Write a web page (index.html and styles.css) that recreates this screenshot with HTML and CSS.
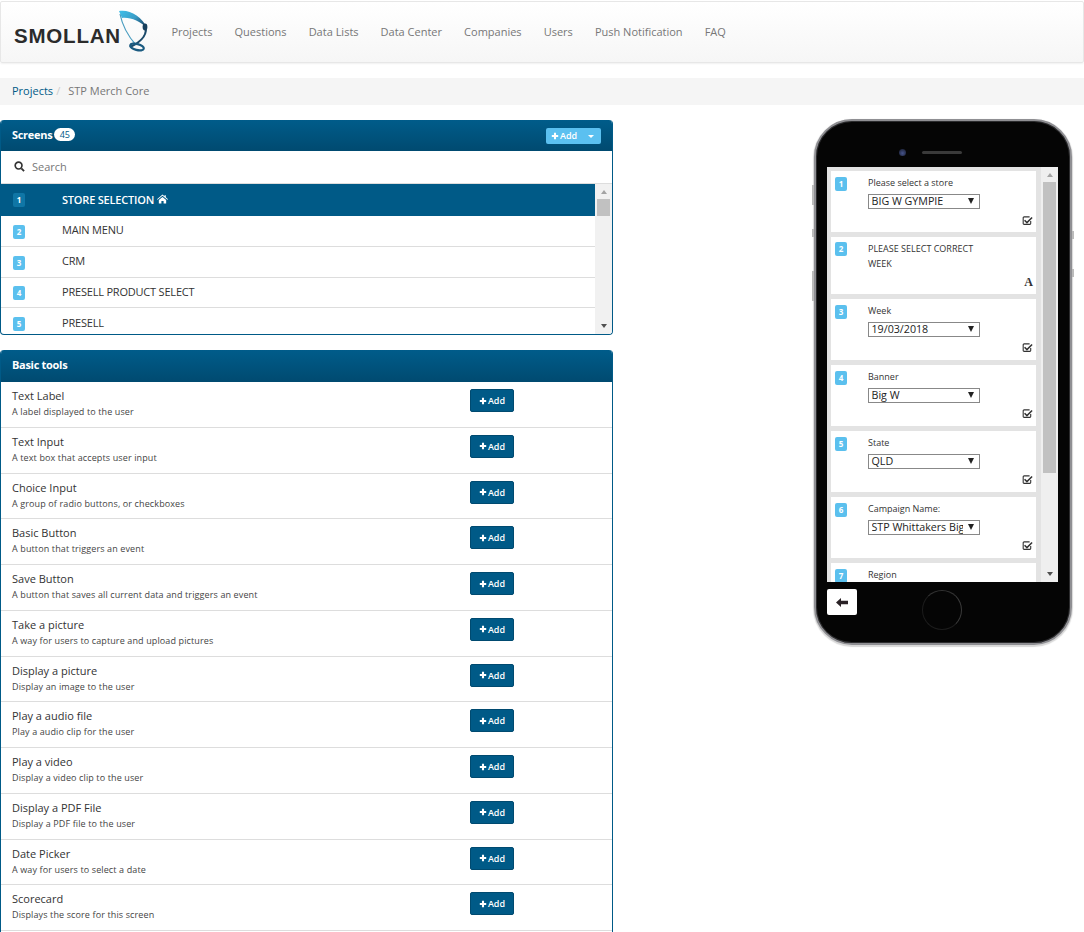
FILE: index.html
```html
<!DOCTYPE html>
<html lang="en">
<head>
<meta charset="utf-8">
<title>STP Merch Core</title>
<link rel="stylesheet" href="styles.css">
</head>
<body>
<svg class="defs" width="0" height="0" aria-hidden="true">
  <symbol id="plus" viewBox="0 0 10 10"><path d="M3.7 1h2.6v2.7H9v2.6H6.3V9H3.7V6.3H1V3.7h2.7z" fill="currentColor"/></symbol>
  <symbol id="check" viewBox="0 0 12 12"><path d="M9.5 6.500v2.700a1 1 0 0 1-1 1H2.300a1 1 0 0 1-1-1V3a1 1 0 0 1 1-1h6" fill="none" stroke="currentColor" stroke-width="1.200"/><path d="M3.400 5.200l2 2 5-5 1.200 1.200-6.200 6.200-3.200-3.200z" fill="currentColor"/></symbol>
</svg>
<header class="navbar">
  <a class="brand">
    <span class="brand-text">SMOLLAN</span>
    <svg class="brand-mark" width="34" height="44" viewBox="0 0 34 44">
      <defs><linearGradient id="lg" x1="0" y1="0" x2="1" y2=".6"><stop offset="0" stop-color="#3fc0ea"/><stop offset=".6" stop-color="#3a9cc6"/><stop offset="1" stop-color="#1c4f72"/></linearGradient></defs>
      <path d="M1 1C11-1 24 6 29 18 22 11 12 7 4 8z" fill="url(#lg)"/>
      <path d="M2 4C4 14 10 26 18 35" fill="none" stroke="#4a9dc0" stroke-width="1.200"/>
      <path d="M27 15C30 23 25 31 12 37" fill="none" stroke="#1c4a6a" stroke-width="2.200"/>
      <ellipse cx="27" cy="17" rx="2.400" ry="3.400" fill="#173f5c"/>
      <ellipse cx="19" cy="37" rx="7" ry="3" fill="none" stroke="#1a5a80" stroke-width="2.200" transform="rotate(15 19 37)"/>
    </svg>
  </a>
  <nav class="nav">
    <a>Projects</a><a>Questions</a><a>Data Lists</a><a>Data Center</a><a>Companies</a><a>Users</a><a>Push Notification</a><a>FAQ</a>
  </nav>
</header>

<div class="breadcrumb"><a>Projects</a><span class="sep">/</span><span class="current">STP Merch Core</span></div>

<main class="content">
  <div class="left">
    <section class="panel screens">
      <div class="panel-head">
        <span class="panel-title">Screens</span><span class="badge">45</span>
        <span class="split-add"><span class="split-main"><svg class="ico"><use href="#plus"/></svg>Add</span><span class="split-caret"></span></span>
      </div>
      <div class="search">
        <svg width="11" height="11" viewBox="0 0 12 12"><circle cx="5" cy="5" r="3.700" fill="none" stroke="#333" stroke-width="1.800"/><path d="M8 8l3 3" stroke="#333" stroke-width="2"/></svg>
        <span>Search</span>
      </div>
      <div class="list-wrap">
        <ul class="screen-list">
          <li class="active"><span class="num">1</span><span class="name">STORE SELECTION</span><svg class="home" width="11" height="10" viewBox="0 0 12 10"><path d="M6 0l2.200 1.900V.8h1.400v2.300L12 5.200l-.7.7L6 1.500.7 5.900 0 5.200zM2 6l4-3.300 4 3.300v4H7.200V7.200H4.800V10H2z" fill="#fff"/></svg></li>
          <li><span class="num">2</span><span class="name">MAIN MENU</span></li>
          <li><span class="num">3</span><span class="name">CRM</span></li>
          <li><span class="num">4</span><span class="name">PRESELL PRODUCT SELECT</span></li>
          <li><span class="num">5</span><span class="name">PRESELL</span></li>
        </ul>
        <div class="scrollbar">
          <span class="arrow up"></span><span class="thumb"></span><span class="arrow down"></span>
        </div>
      </div>
    </section>

    <section class="panel tools">
      <div class="panel-head tall"><span class="panel-title">Basic tools</span></div>
      <ul class="tool-list">
        <li><div class="tool-text"><b>Text Label</b><small>A label displayed to the user</small></div><button class="add"><svg class="ico"><use href="#plus"/></svg>Add</button></li>
        <li><div class="tool-text"><b>Text Input</b><small>A text box that accepts user input</small></div><button class="add"><svg class="ico"><use href="#plus"/></svg>Add</button></li>
        <li><div class="tool-text"><b>Choice Input</b><small>A group of radio buttons, or checkboxes</small></div><button class="add"><svg class="ico"><use href="#plus"/></svg>Add</button></li>
        <li><div class="tool-text"><b>Basic Button</b><small>A button that triggers an event</small></div><button class="add"><svg class="ico"><use href="#plus"/></svg>Add</button></li>
        <li><div class="tool-text"><b>Save Button</b><small>A button that saves all current data and triggers an event</small></div><button class="add"><svg class="ico"><use href="#plus"/></svg>Add</button></li>
        <li><div class="tool-text"><b>Take a picture</b><small>A way for users to capture and upload pictures</small></div><button class="add"><svg class="ico"><use href="#plus"/></svg>Add</button></li>
        <li><div class="tool-text"><b>Display a picture</b><small>Display an image to the user</small></div><button class="add"><svg class="ico"><use href="#plus"/></svg>Add</button></li>
        <li><div class="tool-text"><b>Play a audio file</b><small>Play a audio clip for the user</small></div><button class="add"><svg class="ico"><use href="#plus"/></svg>Add</button></li>
        <li><div class="tool-text"><b>Play a video</b><small>Display a video clip to the user</small></div><button class="add"><svg class="ico"><use href="#plus"/></svg>Add</button></li>
        <li><div class="tool-text"><b>Display a PDF File</b><small>Display a PDF file to the user</small></div><button class="add"><svg class="ico"><use href="#plus"/></svg>Add</button></li>
        <li><div class="tool-text"><b>Date Picker</b><small>A way for users to select a date</small></div><button class="add"><svg class="ico"><use href="#plus"/></svg>Add</button></li>
        <li><div class="tool-text"><b>Scorecard</b><small>Displays the score for this screen</small></div><button class="add"><svg class="ico"><use href="#plus"/></svg>Add</button></li>
      </ul>
    </section>
  </div>

  <aside class="phone">
    <span class="side-btn b1"></span><span class="side-btn b2"></span><span class="side-btn b3"></span><span class="side-btn b4"></span><span class="side-btn b5"></span>
    <div class="earpiece"><span class="camera"></span><span class="speaker"></span></div>
    <div class="phone-screen">
      <div class="cards">
        <div class="card h61 first"><span class="num">1</span><div class="card-body"><label>Please select a store</label><div class="fake-select">BIG W GYMPIE</div></div><svg class="card-ico"><use href="#check"/></svg></div>
        <div class="card h57"><span class="num up1">2</span><div class="card-body"><p class="card-label">PLEASE SELECT CORRECT WEEK</p></div><span class="card-a">A</span></div>
        <div class="card h61"><span class="num">3</span><div class="card-body"><label>Week</label><div class="fake-select">19/03/2018</div></div><svg class="card-ico"><use href="#check"/></svg></div>
        <div class="card h61"><span class="num">4</span><div class="card-body"><label>Banner</label><div class="fake-select">Big W</div></div><svg class="card-ico"><use href="#check"/></svg></div>
        <div class="card h61"><span class="num">5</span><div class="card-body"><label>State</label><div class="fake-select">QLD</div></div><svg class="card-ico"><use href="#check"/></svg></div>
        <div class="card h61"><span class="num">6</span><div class="card-body"><label>Campaign Name:</label><div class="fake-select"><span class="clip">STP Whittakers Big</span></div></div><svg class="card-ico"><use href="#check"/></svg></div>
        <div class="card h61"><span class="num">7</span><div class="card-body"><label>Region</label></div></div>
      </div>
      <div class="phone-scroll"><span class="arrow up"></span><span class="thumb"></span><span class="arrow down"></span></div>
    </div>
    <div class="phone-bottom">
      <button class="back"><svg width="12" height="9" viewBox="0 0 12 9"><path d="M0 4.500L5 0v2.800h7v3.400H5V9z" fill="#2a2226"/></svg></button>
      <span class="home-btn"></span>
    </div>
  </aside>
</main>
</body>
</html>
```
FILE: styles.css
```css
* { box-sizing: border-box; }
html, body { margin: 0; height: 932px; overflow: hidden; background: #fff; }
body { font-family: "Open Sans", "Liberation Sans", sans-serif; font-size: 11px; color: #333; padding-top: 1px; }
.defs { position: absolute; }
ul { list-style: none; margin: 0; padding: 0; }

.navbar { height: 62px; display: flex; align-items: center; border: 1px solid #e7e7e7; border-radius: 2px; background: linear-gradient(#fff, #f6f6f6); box-shadow: 0 1px 2px rgba(0,0,0,.06); }
.brand { position: relative; width: 159px; height: 60px; flex: none; display: block; }
.brand-text { position: absolute; left: 13px; top: 21px; font-family: "Liberation Sans", sans-serif; font-weight: 700; font-size: 20.500px; letter-spacing: .8px; line-height: 26px; color: #2b2b2b; }
.brand-mark { position: absolute; left: 117px; top: 8px; }
.nav { display: flex; gap: 22.050px; margin-left: 11.400px; }
.nav a { color: #777; font-size: 11px; line-height: 16px; }

.breadcrumb { margin-top: 15px; height: 27px; background: #f5f5f5; padding: 0 0 2px 12px; display: flex; align-items: center; font-size: 11px; }
.breadcrumb a { color: #005a87; }
.sep { color: #ccc; margin: 0 8px 0 3px; }
.current { color: #777; }

.content { display: flex; align-items: flex-start; margin-top: 15px; }
.left { width: 613px; flex: none; display: flex; flex-direction: column; gap: 15px; }

.panel { border: 1px solid #005a87; border-top: 0; border-radius: 4px; overflow: hidden; background: #fff; }
.panel-head { height: 31px; padding: 0 0 2px 11px; display: flex; align-items: center; color: #fff; background: linear-gradient(#005c8a, #004a70); position: relative; }
.panel-head.tall { height: 32px; padding-bottom: 3px; }
.panel-title { font-weight: 700; font-size: 11px; letter-spacing: -.3px; }
.badge { margin-left: 2px; height: 13px; min-width: 21px; padding: 0 5px; border-radius: 7px; background: #fff; color: #005a87; font-size: 9px; line-height: 13px; text-align: center; }
.split-add { margin: 2px 11px 0 auto; height: 16px; display: flex; background: #5bc0f0; border-radius: 2px; color: #fff; font-size: 9px; font-weight: 600; line-height: 16px; }
.split-main { width: 34px; padding-left: 5px; display: flex; align-items: center; gap: 1px; }
.split-caret { width: 21px; position: relative; }
.split-caret::after { content: ""; position: absolute; left: 8px; top: 7px; border: 3px solid transparent; border-top-color: #fff; border-bottom: 0; }
.ico { width: 8px; height: 8px; }

.search { height: 33px; display: flex; align-items: center; gap: 7px; padding: 0 0 2px 13px; color: #777; font-size: 11px; border-bottom: 1px solid #ddd; }

.list-wrap { height: 150px; display: flex; overflow: hidden; }
.screen-list { flex: 1; min-width: 0; }
.screen-list li { height: 30.750px; display: flex; align-items: center; padding-left: 12px; border-bottom: 1px solid #ddd; font-size: 11px; color: #333; }
.screen-list li.active { height: 32px; background: #005a87; color: #fff; font-weight: 600; border-bottom: 0; }
.screen-list li .num { margin-top: 2px; }
.screen-list li.active .num { margin-top: 0; }
.num { width: 12px; height: 14px; flex: none; border-radius: 2px; background: #5bc0ee; color: #fff; font-size: 8px; font-weight: 700; line-height: 14px; text-align: center; }
.active .num { background: #0f76a6; }
.name { margin: 0 0 2px 37px; letter-spacing: -.2px; }
.home { margin: 0 0 2px 3px; }

.scrollbar { width: 17px; flex: none; background: #f1f1f1; display: flex; flex-direction: column; align-items: center; position: relative; }
.scrollbar .thumb { width: 13px; height: 17px; margin-top: 5px; background: #c1c1c1; }
.arrow { width: 0; height: 0; border-left: 3.500px solid transparent; border-right: 3.500px solid transparent; }
.arrow.up { margin-top: 6px; border-bottom: 4px solid #a3a3a3; }
.arrow.down { margin-top: auto; margin-bottom: 6px; border-top: 4px solid #505050; }

.tool-list { padding-bottom: 30px; }
.tool-list li { height: 45.750px; display: flex; align-items: flex-start; justify-content: space-between; padding: 6px 98px 0 11px; border-bottom: 1px solid #ddd; }
.tool-text { display: flex; flex-direction: column; }
.tool-text b { font-weight: 400; font-size: 11px; line-height: 16px; color: #333; }
.tool-text small { font-size: 9px; line-height: 14px; margin-top: 1px; letter-spacing: .12px; color: #444; }
.add { width: 44px; height: 23px; margin-top: 1px; padding: 0; display: flex; align-items: center; justify-content: center; gap: 1px; background: #005a87; border: 1px solid #004a70; border-radius: 2px; color: #fff; font-family: inherit; font-size: 9px; font-weight: 600; }

.phone { position: relative; margin: -1px 0 0 201px; width: 258px; height: 526px; flex: none; background: #050505; border: 2px solid #8f8f93; border-radius: 38px; box-shadow: 0 1px 1px 1px #d8d8d8, inset 0 0 0 1px #2c2c2e; display: flex; flex-direction: column; align-items: stretch; }
.side-btn { position: absolute; width: 2px; background: #bbb; }
.b1 { left: -4px; top: 64px; height: 20px; }
.b2 { left: -4px; top: 108px; height: 8px; }
.b3 { left: -4px; top: 150px; height: 30px; }
.b4 { right: -4px; top: 110px; height: 8px; }
.b5 { right: -4px; top: 148px; height: 8px; }
.earpiece { height: 46px; flex: none; display: flex; justify-content: center; align-items: center; gap: 16px; padding: 16px 26px 0 0; }
.camera { width: 7px; height: 7px; border-radius: 50%; background: radial-gradient(circle at 50% 60%, #46548c, #141826); }
.speaker { width: 40px; height: 3px; border-radius: 2px; background: #3a3a3a; }
.phone-screen { margin: 0 12px 0 11px; height: 415px; flex: none; background: #e3e3e3; display: flex; overflow: hidden; }
.cards { width: 214px; flex: none; padding: 4px 5px 0 4px; display: flex; flex-direction: column; gap: 5px; }
.card { position: relative; flex: none; background: #fff; padding: 6px 0 0 4px; display: flex; }
.h61 { height: 61px; }
.h57 { height: 57px; }
.up1 { margin-top: -1px; }
.card-body { margin-left: 21px; min-width: 0; width: 125px; }
.card label { display: block; font-size: 9px; line-height: 12px; color: #333; }
.card-label { margin: -2px 0 0; font-size: 9px; line-height: 15px; color: #333; }
.fake-select { position: relative; margin-top: 5px; width: 112px; height: 15px; border: 1px solid #888; padding-left: 2.500px; font-size: 10.700px; line-height: 13px; color: #222; white-space: nowrap; }
.fake-select::after { content: ""; position: absolute; right: 5px; top: 3px; border-left: 3px solid transparent; border-right: 3px solid transparent; border-top: 6px solid #222; }
.clip { display: block; width: 91px; overflow: hidden; }
.card-ico { position: absolute; right: 3px; bottom: 7px; width: 11px; height: 11px; color: #333; }
.first .card-ico { bottom: 6px; }
.card-a { position: absolute; right: 3px; bottom: 6px; font-family: "Liberation Serif", serif; font-weight: 700; font-size: 12px; line-height: 12px; color: #333; }
.phone-scroll { width: 17px; margin-left: auto; background: #efefef; display: flex; flex-direction: column; align-items: center; }
.phone-scroll .thumb { width: 13px; height: 291px; margin-top: 5px; background: #c1c1c1; }
.phone-bottom { position: relative; flex: 1; }
.back { position: absolute; left: 11px; top: 7px; width: 30px; height: 26px; padding: 0; background: #fff; border: 0; border-radius: 2px; display: flex; align-items: center; justify-content: center; }
.home-btn { position: absolute; left: 106px; top: 8px; width: 40px; height: 40px; border-radius: 50%; border: 1px solid #1c1c1c; border-top-color: #333; border-right-color: #3a3a3a; }
```
